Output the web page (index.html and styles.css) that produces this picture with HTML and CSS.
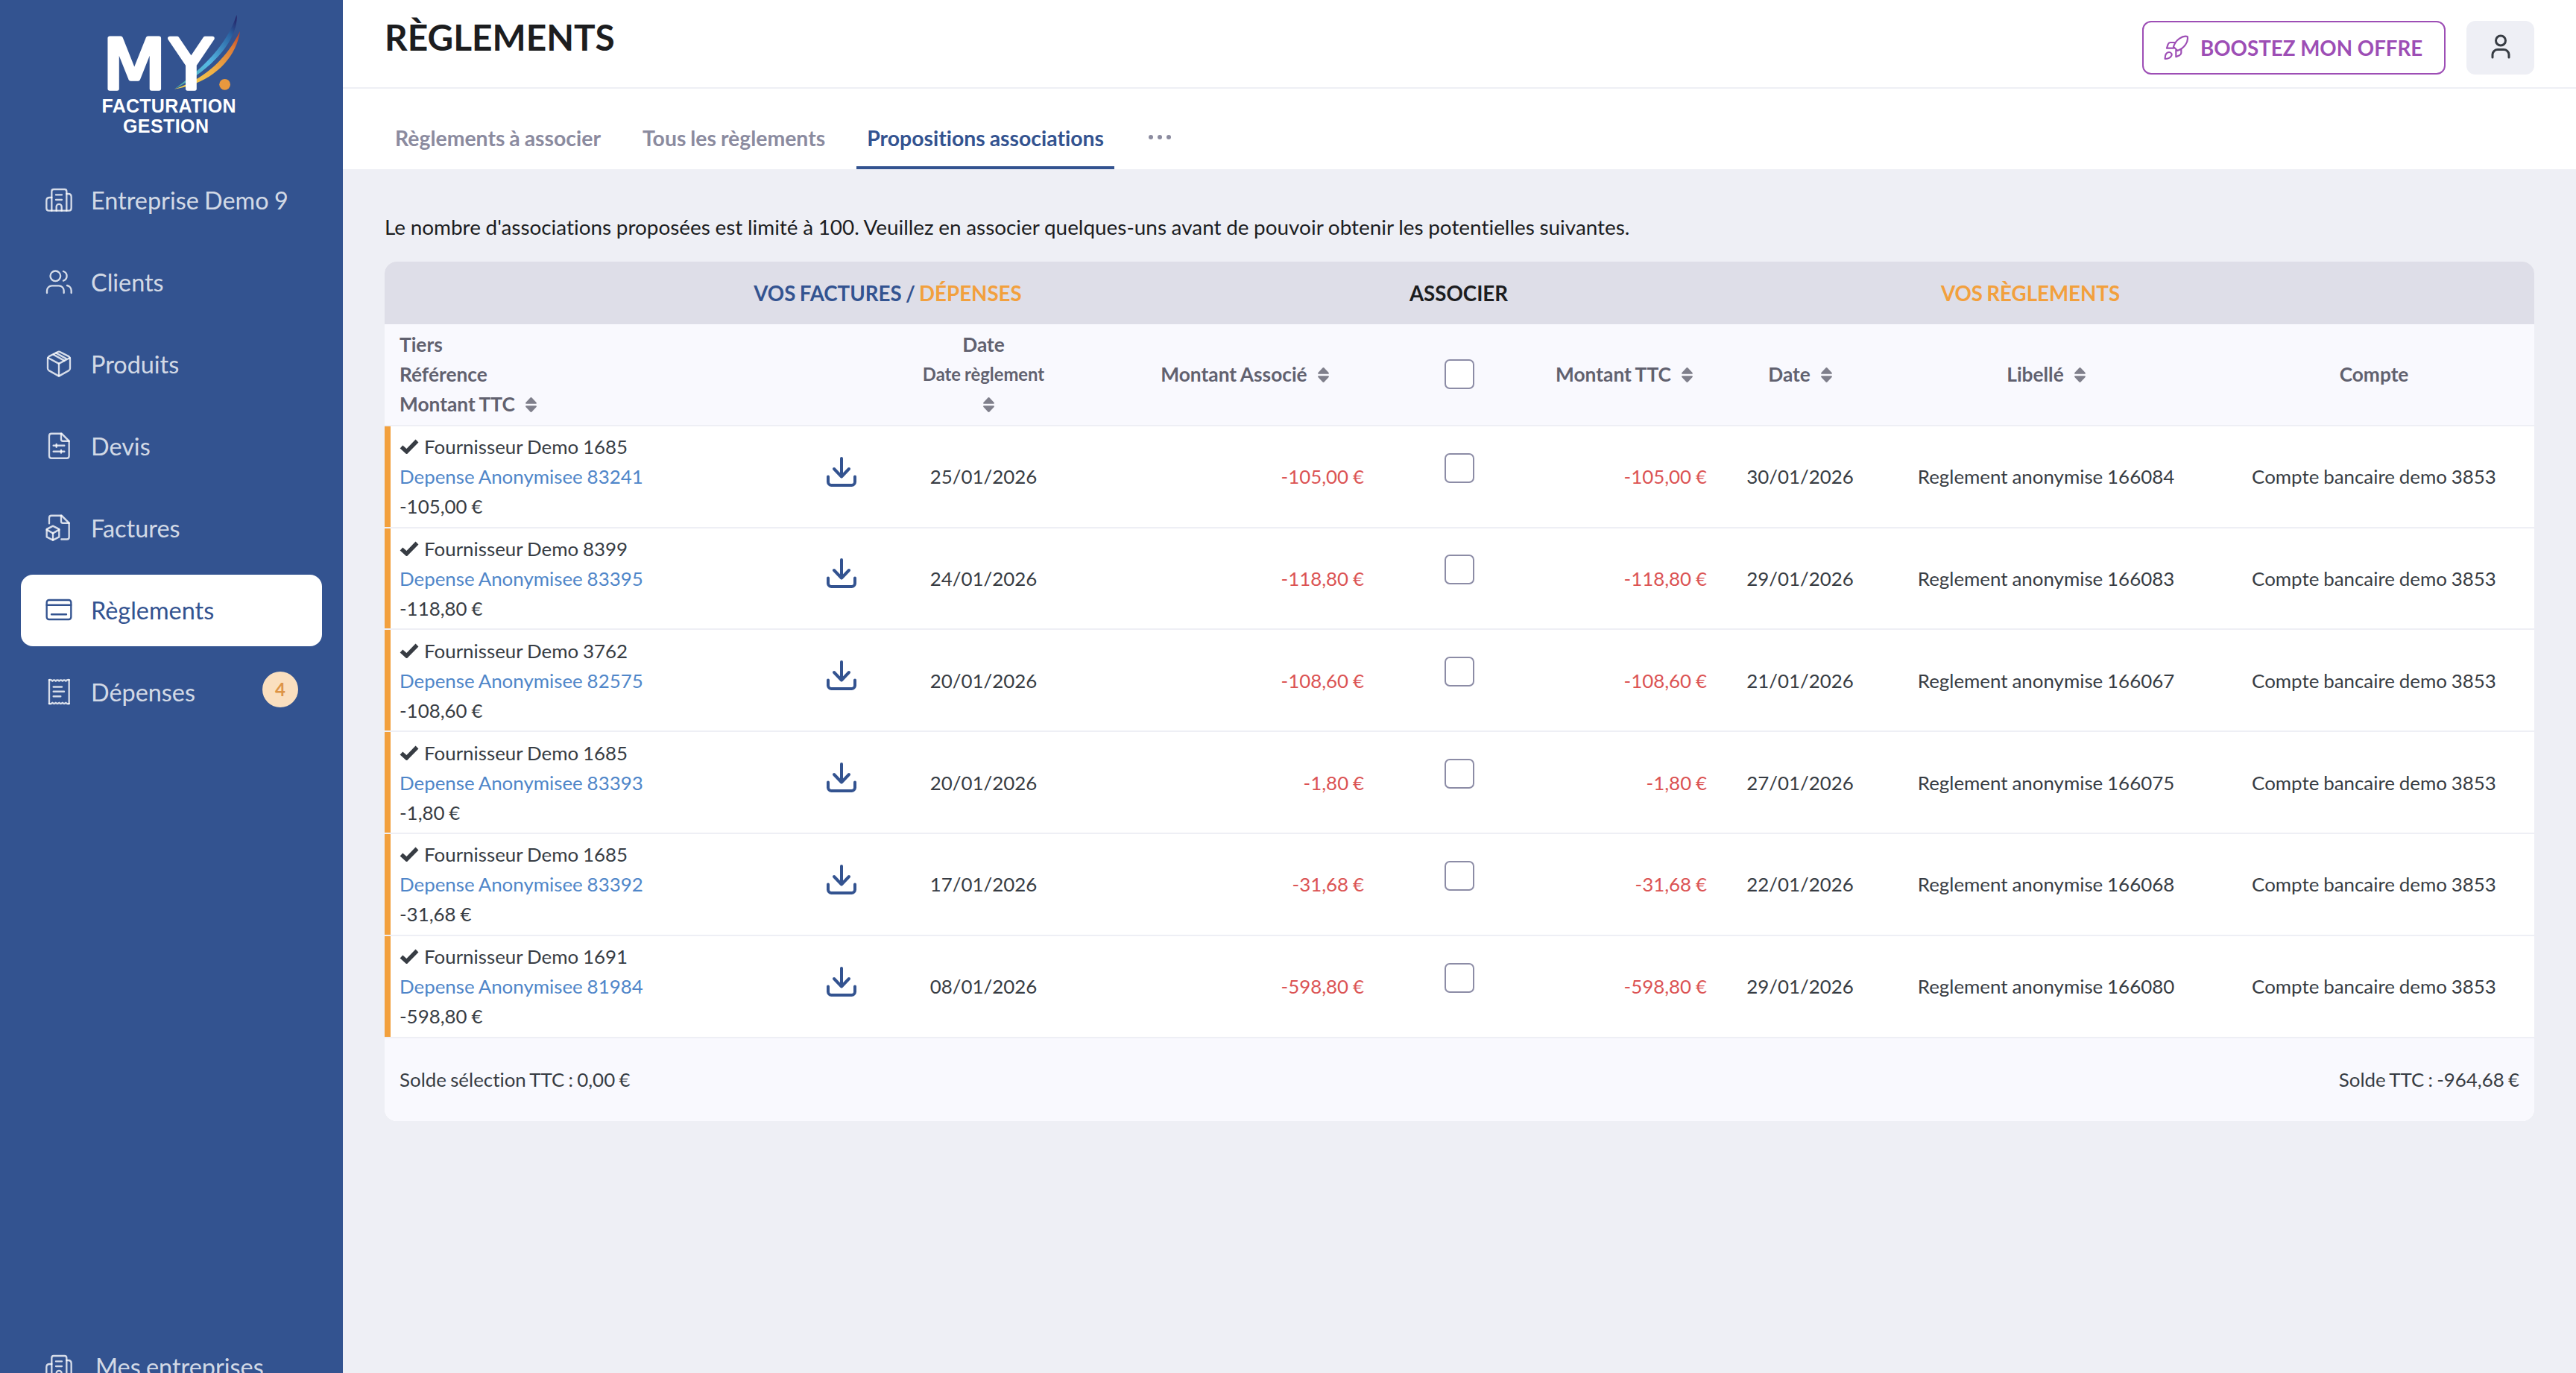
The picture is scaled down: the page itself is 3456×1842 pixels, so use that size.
FILE: index.html
```html
<!DOCTYPE html>
<html lang="fr">
<head>
<meta charset="utf-8">
<title>Règlements</title>
<link rel="stylesheet" href="styles.css">
</head>
<body>
<svg class="defs" width="0" height="0" aria-hidden="true">
  <symbol id="sort" viewBox="0 0 15 20"><path d="M7.5 0Q8.2 0 9 .9L14.6 7Q15.4 8.7 14 8.7H1Q-.4 8.7 .4 7L6 .9Q6.800 0 7.500 0ZM7.500 20Q8.200 20 9 19.100L14.600 13Q15.400 11.300 14 11.300H1Q-.4 11.300 .4 13L6 19.100Q6.800 20 7.500 20Z"/></symbol>
  <symbol id="download" viewBox="0 0 40 40"><path d="M2 26.500V33.500A4.500 4.500 0 0 0 6.500 38H33.500A4.500 4.500 0 0 0 38 33.500V26.500M20 2V26.500M10 16L20 26.500L30 16" fill="none" stroke="currentColor" stroke-width="4" stroke-linecap="round" stroke-linejoin="round"/></symbol>
  <symbol id="check" viewBox="0 0 26 20"><path d="M2.500 10.500L9.500 16.800L23.500 2.500" fill="none" stroke="currentColor" stroke-width="5.500"/></symbol>
  <symbol id="company" viewBox="168 735 144 144"><path d="M208 848V770Q208 762 216 762H260Q268 762 268 770V848"/><path d="M208 795H200Q187 795 187 807V838Q187 848 197 848H277Q287 848 287 838V793Q287 780 275 780H268"/><path d="M225 784H249M225 804H249"/><path d="M227 848V832A10.500 10.500 0 0 1 248 832V848"/></symbol>
</svg>

<div class="app">
  <aside class="sidebar">
    <svg class="logo" viewBox="130 10 200 180" role="img" aria-label="My Facturation Gestion">
      <defs>
        <linearGradient id="blue" x1="0" y1="1" x2="1" y2="0"><stop offset="0" stop-color="#4fae9c"/><stop offset=".45" stop-color="#56b9e4"/><stop offset=".8" stop-color="#2b66a5"/><stop offset="1" stop-color="#241a5e"/></linearGradient>
        <linearGradient id="gold" x1="0" y1="1" x2="1" y2="0"><stop offset="0" stop-color="#f3d94e"/><stop offset=".45" stop-color="#f0b046"/><stop offset=".8" stop-color="#dc7c38"/><stop offset="1" stop-color="#c03c22"/></linearGradient>
      </defs>
      <path fill="url(#blue)" d="M317.500 20C320 45 297 86 234 119.500C272 91 303 63 317.500 20Z"/>
      <path fill="url(#gold)" d="M322 42C317 78 285 112 234 119.500C280 104 306 74 322 42Z"/>
      <text class="logo-big" transform="translate(137.800 119.300) scale(1.060 1)">M</text>
      <text class="logo-big" transform="translate(228 119.300)">Y</text>
      <circle cx="301.600" cy="113.300" r="7.400" fill="#e8983e"/>
      <text class="logo-small" x="136.500" y="151" textLength="180">FACTURATION</text>
      <text class="logo-small" x="165" y="178" textLength="115">GESTION</text>
    </svg>
    <nav class="nav">
      <a class="nav-item"><svg class="nav-icon"><use href="#company"/></svg><span>Entreprise Demo 9</span></a>
      <a class="nav-item"><svg class="nav-icon" viewBox="168 1065 144 144"><circle cx="223" cy="1111" r="20.500"/><path d="M189 1179V1170A20 20 0 0 1 209 1150H237A20 20 0 0 1 257 1170V1179"/><path d="M255 1092A20 20 0 0 1 255 1130"/><path d="M270 1149A21 21 0 0 1 287 1170V1179"/></svg><span>Clients</span></a>
      <a class="nav-item"><svg class="nav-icon" viewBox="168 126 144 134.400" preserveAspectRatio="none"><path d="M233 146Q237 143.500 241 146L277 163Q282 166 282 171V208Q282 213 277 216L241 235Q237 237.500 233 235L197 216Q192 213 192 208V171Q192 166 197 163Z"/><path d="M193 168L237 190L281 168"/><path d="M237 190V236"/><path d="M215 156L259 179"/><path d="M226 150L266 171"/></svg><span>Produits</span></a>
      <a class="nav-item"><svg class="nav-icon" viewBox="168 434 144 134.400" preserveAspectRatio="none"><path d="M207 453H248L278 481V536Q278 545 269 545H207Q198 545 198 536V462Q198 453 207 453Z"/><path d="M246 453V474Q246 481 253 481H278"/><path d="M215 498H259"/><path d="M227 493V503"/><path d="M215 520H259"/><path d="M246 515V525"/></svg><span>Devis</span></a>
      <a class="nav-item"><svg class="nav-icon" viewBox="168 742 144 134.400" preserveAspectRatio="none"><path d="M198 790V769Q198 761 207 761H248L278 789V842Q278 850 269 850H247"/><path d="M246 761V782Q246 789 253 789H278"/><path d="M213 800L238 812V841L213 853L188 841V812Z"/><path d="M188 814L213 827L238 814"/><path d="M213 827V852"/></svg><span>Factures</span></a>
      <a class="nav-item active"><svg class="nav-icon" viewBox="168 1050 144 134.400" preserveAspectRatio="none"><rect x="188" y="1078" width="98" height="73" rx="9"/><path d="M188 1097H286M207 1132H267"/></svg><span>Règlements</span></a>
      <a class="nav-item"><svg class="nav-icon" viewBox="168 1358 144 134.400" preserveAspectRatio="none"><path d="M198 1378V1467M278 1378V1467"/><path d="M198 1378Q205 1376 211 1382Q218 1376 224.500 1382Q231 1376 238 1382Q244.500 1376 251.500 1382Q258 1376 265 1382Q271 1376 278 1378"/><path d="M198 1467Q205 1470 211 1464Q218 1470 224.500 1464Q231 1470 238 1464Q244.500 1470 251.500 1464Q258 1470 265 1464Q271 1470 278 1467"/><path d="M215 1404H249M215 1422H258M215 1440H244"/></svg><span>Dépenses</span><b class="badge">4</b></a>
    </nav>
    <a class="nav-item nav-foot"><svg class="nav-icon"><use href="#company"/></svg><span>Mes entreprises</span></a>
  </aside>

  <main class="main">
    <header class="header">
      <h1>RÈGLEMENTS</h1>
      <div class="actions">
        <a class="boost"><svg class="rocket" viewBox="126 78 105 108"><path d="M224 87C205 82 177 99 168 128L184 144C212 134 229 108 224 87ZM168 134H141L146 118Q149 111 155 111H172M178 142V169L192 163Q199 159 199 153V136M134 177C133 160 140 150 150 150C160 150 164 160 158 167C153 174 144 177 134 177Z"/></svg>BOOSTEZ MON OFFRE</a>
        <a class="user"><svg viewBox="0 0 28 34"><circle cx="14" cy="8.500" r="6.500"/><path d="M3 31V27A7 7 0 0 1 10 20.500H18A7 7 0 0 1 25 27V31"/></svg></a>
      </div>
    </header>
    <nav class="tabs">
      <a>Règlements à associer</a>
      <a>Tous les règlements</a>
      <a class="current">Propositions associations</a>
      <a class="more"><i></i><i></i><i></i></a>
    </nav>
    <section class="content">
      <p class="intro">Le nombre d'associations proposées est limité à 100. Veuillez en associer quelques-uns avant de pouvoir obtenir les potentielles suivantes.</p>
      <div class="table">
        <div class="band"><div class="blue">VOS FACTURES / <span class="orange">DÉPENSES</span></div><div>ASSOCIER</div><div class="orange">VOS RÈGLEMENTS</div></div>
        <div class="row head">
          <div class="first"><div>Tiers</div><div>Référence</div><div>Montant TTC<svg class="sort"><use href="#sort"/></svg></div></div>
          <div></div>
          <div class="c"><div>Date</div><div class="small">Date règlement</div><div><svg class="sort"><use href="#sort"/></svg></div></div>
          <div class="c">Montant Associé<svg class="sort"><use href="#sort"/></svg></div>
          <div class="c"><span class="box"></span></div>
          <div class="c">Montant TTC<svg class="sort"><use href="#sort"/></svg></div>
          <div class="c">Date<svg class="sort"><use href="#sort"/></svg></div>
          <div class="c">Libellé<svg class="sort"><use href="#sort"/></svg></div>
          <div class="c">Compte</div>
        </div>
        <div class="row">
          <div class="first"><div><svg class="check"><use href="#check"/></svg>Fournisseur Demo 1685</div><div class="link">Depense Anonymisee 83241</div><div>-105,00 €</div></div>
          <div class="c"><svg class="dl"><use href="#download"/></svg></div><div class="c">25/01/2026</div><div class="amount assoc">-105,00 €</div><div class="c"><span class="box"></span></div><div class="amount">-105,00 €</div><div class="c">30/01/2026</div><div class="c">Reglement anonymise 166084</div><div class="c">Compte bancaire demo 3853</div>
        </div>
        <div class="row">
          <div class="first"><div><svg class="check"><use href="#check"/></svg>Fournisseur Demo 8399</div><div class="link">Depense Anonymisee 83395</div><div>-118,80 €</div></div>
          <div class="c"><svg class="dl"><use href="#download"/></svg></div><div class="c">24/01/2026</div><div class="amount assoc">-118,80 €</div><div class="c"><span class="box"></span></div><div class="amount">-118,80 €</div><div class="c">29/01/2026</div><div class="c">Reglement anonymise 166083</div><div class="c">Compte bancaire demo 3853</div>
        </div>
        <div class="row">
          <div class="first"><div><svg class="check"><use href="#check"/></svg>Fournisseur Demo 3762</div><div class="link">Depense Anonymisee 82575</div><div>-108,60 €</div></div>
          <div class="c"><svg class="dl"><use href="#download"/></svg></div><div class="c">20/01/2026</div><div class="amount assoc">-108,60 €</div><div class="c"><span class="box"></span></div><div class="amount">-108,60 €</div><div class="c">21/01/2026</div><div class="c">Reglement anonymise 166067</div><div class="c">Compte bancaire demo 3853</div>
        </div>
        <div class="row">
          <div class="first"><div><svg class="check"><use href="#check"/></svg>Fournisseur Demo 1685</div><div class="link">Depense Anonymisee 83393</div><div>-1,80 €</div></div>
          <div class="c"><svg class="dl"><use href="#download"/></svg></div><div class="c">20/01/2026</div><div class="amount assoc">-1,80 €</div><div class="c"><span class="box"></span></div><div class="amount">-1,80 €</div><div class="c">27/01/2026</div><div class="c">Reglement anonymise 166075</div><div class="c">Compte bancaire demo 3853</div>
        </div>
        <div class="row">
          <div class="first"><div><svg class="check"><use href="#check"/></svg>Fournisseur Demo 1685</div><div class="link">Depense Anonymisee 83392</div><div>-31,68 €</div></div>
          <div class="c"><svg class="dl"><use href="#download"/></svg></div><div class="c">17/01/2026</div><div class="amount assoc">-31,68 €</div><div class="c"><span class="box"></span></div><div class="amount">-31,68 €</div><div class="c">22/01/2026</div><div class="c">Reglement anonymise 166068</div><div class="c">Compte bancaire demo 3853</div>
        </div>
        <div class="row">
          <div class="first"><div><svg class="check"><use href="#check"/></svg>Fournisseur Demo 1691</div><div class="link">Depense Anonymisee 81984</div><div>-598,80 €</div></div>
          <div class="c"><svg class="dl"><use href="#download"/></svg></div><div class="c">08/01/2026</div><div class="amount assoc">-598,80 €</div><div class="c"><span class="box"></span></div><div class="amount">-598,80 €</div><div class="c">29/01/2026</div><div class="c">Reglement anonymise 166080</div><div class="c">Compte bancaire demo 3853</div>
        </div>
        <div class="totals"><span>Solde sélection TTC : 0,00 €</span><span>Solde TTC : -964,68 €</span></div>
      </div>
    </section>
  </main>
</div>
</body>
</html>
```
FILE: styles.css
```css
* { box-sizing: border-box; }
body { margin: 0; font-family: Lato, "Open Sans", sans-serif; font-variant-ligatures: none; background: #eeeff5; color: #373c43; }
.defs { display: block; }
.app { display: flex; height: 1842px; overflow: hidden; }

.sidebar { width: 460px; flex: none; background: #335390; display: flex; flex-direction: column; padding: 10px 28px 0; overflow: hidden; }
.logo { width: 200px; height: 180px; margin-left: 102px; flex: none; }
.logo-big { font: 93px "DejaVu Sans", sans-serif; fill: #fff; stroke: #fff; stroke-width: 5.5px; stroke-linejoin: round; }
.logo-small { font: bold 25px "Liberation Sans", Arial, sans-serif; fill: #fff; }
.nav { display: flex; flex-direction: column; gap: 14px; margin-top: 31px; }
.nav-item { height: 96px; flex: none; display: flex; align-items: center; padding: 0 32px 0 28px; border-radius: 16px; color: rgba(255, 255, 255, .8); font-size: 32.4px; line-height: 40px; word-spacing: -1px; }
.nav-item span { margin-left: 18px; white-space: nowrap; }
.nav-icon { width: 48px; height: 48px; flex: none; fill: none; stroke: currentColor; stroke-width: 7px; stroke-linecap: round; stroke-linejoin: round; }
.nav-item.active { background: #fff; color: #335390; }
.badge { width: 48px; height: 48px; margin: 0 0 8px auto; border-radius: 50%; background: #fadfbf; color: #dd9446; font-size: 24px; line-height: 48px; text-align: center; }
.nav-foot { margin-top: 809px; }
.nav-foot span { margin-left: 24px; }

.main { flex: 1; min-width: 0; }
.header { height: 119px; background: #fff; border-bottom: 2px solid #eeeff5; padding: 0 56px; display: flex; justify-content: space-between; }
h1 { margin: 20px 0 0; font-size: 47.8px; line-height: 60px; font-weight: 700; color: #1c1d1f; }
.actions { display: flex; gap: 28px; margin-top: 28px; height: 72px; }
.boost { width: 407px; border: 2px solid #9d4eb5; border-radius: 12px; color: #9d4eb5; font-size: 27.7px; font-weight: 700; display: flex; align-items: center; padding-left: 26px; white-space: nowrap; }
.rocket { width: 35px; height: 36px; margin-right: 15px; fill: none; stroke: currentColor; stroke-width: 6.5px; stroke-linejoin: round; stroke-linecap: round; }
.user { width: 91px; border-radius: 12px; background: #eeeff5; display: flex; align-items: center; justify-content: center; }
.user svg { width: 28px; height: 34px; margin-bottom: 2px; fill: none; stroke: #373c43; stroke-width: 3px; stroke-linecap: round; }

.tabs { height: 108px; background: #fff; display: flex; gap: 28px; padding: 26px 56px 0; }
.tabs a { padding: 20px 14px 0; border-bottom: 4px solid transparent; font-size: 28.4px; line-height: 40px; font-weight: 700; color: #8b8b9f; white-space: nowrap; word-spacing: -1px; }
.tabs .current { color: #335390; border-color: #335390; }
.tabs .more { display: flex; gap: 6px; padding: 36px 0 0; margin-left: 18px; }
.more i { width: 6px; height: 6px; border-radius: 50%; background: #8b8b9f; }

.content { padding: 57px 56px 0; }
.intro { margin: 0; height: 67px; font-size: 27.9px; line-height: 40px; color: #1c1d1f; white-space: nowrap; word-spacing: -.5px; }
.table { width: 2884px; border-radius: 16px; overflow: hidden; background: #fff; font-size: 25.9px; line-height: 40px; word-spacing: -.8px; }
.band { display: grid; grid-template-columns: 1350px 182px 1352px; height: 84px; padding-top: 1px; align-items: center; text-align: center; background: #dedee8; font-size: 27.7px; font-weight: 700; color: #1c1d1f; word-spacing: -1.5px; }
.band .blue { color: #335390; }
.band .orange { color: #f2a03d; }
.row { display: grid; grid-template-columns: 579px 70px 309px 392px 182px 262px 210px 450px 430px; height: 136.8px; align-items: center; border-bottom: 2px solid #eeeff5; }
.head { background: #f9f9fe; color: #61616f; font-weight: 700; font-size: 26.3px; }
.first { padding-left: 20px; }
.row:not(.head) .first { border-left: 8px solid #f2a03d; padding-left: 12px; align-self: stretch; padding-top: 7.4px; }
.c { text-align: center; white-space: nowrap; }
.small { font-size: 23.8px; }
.sort { width: 15px; height: 20px; margin-left: 14px; vertical-align: -1px; fill: #7f7f8b; }
.link { color: #4f86c9; }
.amount { text-align: right; padding-right: 20px; color: #db5353; }
.assoc { padding-right: 36px; }
.box { display: block; width: 40px; height: 40px; margin: 0 auto 23px; border: 2px solid #8c8ca6; border-radius: 7px; background: #fff; position: relative; left: 1px; }
.head .box { margin-bottom: 0; }
.dl { display: block; width: 40px; height: 40px; margin: 0 16px 13px 14px; color: #335390; }
.check { width: 26px; height: 20px; margin-right: 7px; }
.totals { height: 111px; display: flex; justify-content: space-between; align-items: center; padding: 0 20px; background: #f9f9fe; word-spacing: -1.4px; }
```
